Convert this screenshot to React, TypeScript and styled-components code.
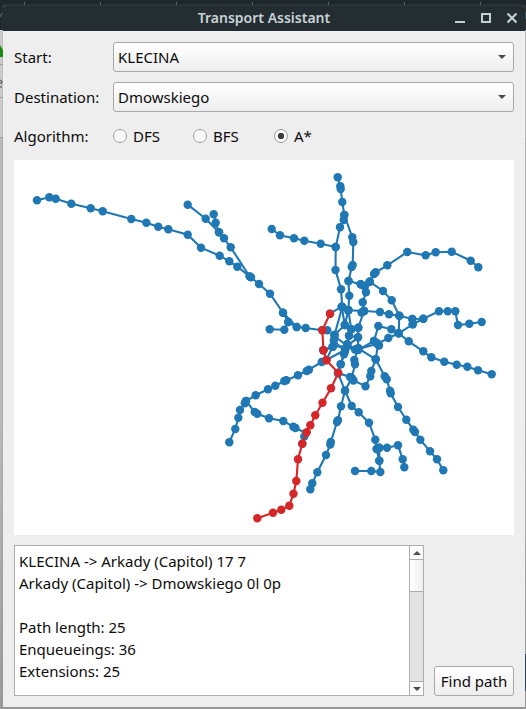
import React, { useState } from 'react';
import styled, { createGlobalStyle } from 'styled-components';

const GlobalStyle = createGlobalStyle`
  * { box-sizing: border-box; }
  body { margin: 0; overflow: hidden; }
`;

const Desktop = styled.div`
  position: relative;
  width: 526px;
  height: 709px;
  padding: 5px 1px 2px 3px;
  overflow: hidden;
  font-family: 'Noto Sans', sans-serif;
  font-size: 15px;
  color: #0c0c0c;
  background: linear-gradient(#1e272c 0 30px, #cfcfcf 30px 137px, #bdbdbd 137px 420px, #9c9c9c 709px);
`;

const Backdrop = styled.svg`
  position: absolute;
  inset: 0;
`;

const Window = styled.main`
  position: relative;
  display: flex;
  flex-direction: column;
  height: 702px;
  background: #eeeeee;
  border-radius: 3px 3px 0 0;
  overflow: hidden;
  box-shadow: 0 0 3px #6666;
`;

const TitleBar = styled.header`
  display: grid;
  grid-template-columns: 70px 1fr 70px;
  align-items: start;
  height: 26px;
  flex: none;
  background: #232d32;
  border-top: 1px solid #2b363b;
  color: #c9d3d6;
`;

const Title = styled.h1`
  grid-column: 2;
  margin: 0;
  text-align: center;
  font-size: 14px;
  line-height: 23px;
  font-weight: 600;
  white-space: nowrap;
`;

const WindowControls = styled.svg`
  display: block;
`;

const Content = styled.div`
  display: flex;
  flex-direction: column;
  padding: 11px 11px 0 11px;
`;

const Field = styled.div<{ $gap?: number }>`
  display: grid;
  grid-template-columns: 99px 401px;
  align-items: center;
  height: 30px;
  margin-bottom: ${(p) => p.$gap ?? 10}px;
`;

const Label = styled.span`
  line-height: 22px;
  white-space: nowrap;
`;

const ComboBox = styled.button`
  display: flex;
  align-items: center;
  justify-content: space-between;
  height: 30px;
  padding: 0 7px 0 4px;
  font: inherit;
  color: inherit;
  text-align: left;
  border: 1px solid #a9a9a9;
  border-radius: 3px;
  background: linear-gradient(#ffffff, #eeeeee);
`;

const RadioGroup = styled.div`
  display: grid;
  grid-template-columns: 80px 81px 1fr;
`;

const RadioLabel = styled.label`
  display: flex;
  align-items: center;
  gap: 6px;
  line-height: 22px;
`;

const Radio = styled.input`
  appearance: none;
  width: 14px;
  height: 14px;
  margin: 0;
  border: 1px solid #9a9a9a;
  border-radius: 50%;
  background: #fff;
  &:checked {
    background: radial-gradient(circle, #3c3c3c 0 2.8px, #fff 3.6px);
  }
`;

const Plot = styled.svg`
  display: block;
  width: 500px;
  height: 375px;
  background: #fff;
`;

const Footer = styled.footer`
  display: flex;
  justify-content: space-between;
  align-items: flex-end;
  margin-top: 10px;
`;

const Output = styled.section`
  display: flex;
  width: 410px;
  height: 151px;
  border: 1px solid #adadad;
  background: #fff;
`;

const OutputText = styled.div`
  flex: 1;
  padding: 4px 4px;
  white-space: pre;
  line-height: 22px;
`;

const ScrollBar = styled.div`
  display: flex;
  flex-direction: column;
  width: 14px;
  border-left: 1px solid #adadad;
  background: #e3e3e3;
`;

const ScrollButton = styled.div<{ $end?: boolean }>`
  display: grid;
  place-items: center;
  height: 14px;
  background: #fbfbfb;
  border-${(p) => (p.$end ? 'top' : 'bottom')}: 1px solid #adadad;
  margin-top: ${(p) => (p.$end ? 'auto' : 0)};
`;

const Thumb = styled.div`
  height: 32px;
  background: linear-gradient(90deg, #fff, #f0f0f0);
  border-bottom: 1px solid #adadad;
`;

const FindButton = styled.button`
  width: 80px;
  height: 30px;
  padding: 0;
  font: inherit;
  color: inherit;
  white-space: nowrap;
  border: 1px solid #a9a9a9;
  border-radius: 3px;
  background: linear-gradient(#ffffff, #eeeeee);
`;

const Arrow = ({ up }: { up?: boolean }) => (
  <svg width="8" height="4" viewBox="0 0 8 4">
    <path d={up ? 'M0 4L4 0L8 4Z' : 'M0 0H8L4 4Z'} fill="#4c4c4c" />
  </svg>
);

type Point = [number, number];

const routes: Point[][] = [
  [[37, 200.3], [49.3, 197.3], [55.7, 198.7], [71.3, 203.7], [90.7, 208.3], [102.7, 211.3], [131.3, 219], [146.3, 222.7], [158.2, 226.7], [168.3, 229.3], [187.7, 234.7], [201, 247.7], [219.7, 255.7], [229.3, 261.3], [237.3, 266.7], [251, 277.3], [259, 284], [270, 293.7], [283, 312.7], [288.3, 322], [296.7, 327], [305.7, 328], [322.3, 330.3], [327.3, 330.3]],
  [[187.7, 204.7], [205.7, 218.7], [219, 232.3], [224, 238.3], [230.7, 247.3], [249.5, 276.3]],
  [[213.7, 214.3], [215.7, 222.7], [219, 232.3]],
  [[283, 312.7], [296.7, 327]],
  [[269.7, 329.3], [284.3, 329.7], [288.3, 322]],
  [[271.7, 229], [280, 235.3], [294, 238.3], [304.3, 240.7], [320.7, 243.7], [335.7, 247]],
  [[337.7, 177.3], [340.3, 186.3], [340.7, 189], [342.3, 202], [344.3, 215], [343.7, 220], [340, 227.3], [335.7, 247], [335.5, 270], [341, 289.2], [342.3, 307], [348.3, 310.3]],
  [[344.3, 215], [352.3, 237.3], [353.3, 242], [352.7, 265], [351.7, 267], [348.5, 281], [349.3, 295.7], [348.3, 310.3]],
  [[348.5, 281], [360.7, 284.3], [369.7, 281.7], [374, 274], [375.7, 272.3], [387.3, 265.3], [407.3, 252], [425.7, 255.3], [435.7, 252.3], [451.7, 251.7], [470.7, 260.7], [478.3, 267.3]],
  [[369.7, 281.7], [383, 291], [391.7, 300.3], [399.3, 315.7], [398.7, 333.3], [408.7, 341.3], [423.3, 351.3], [431.3, 357.3], [444.3, 361.7], [456.7, 364.7], [467.3, 366.7], [478, 370.3], [491.7, 374.3]],
  [[360.7, 284.3], [364, 286], [369.7, 281.7], [366, 292.3], [362.7, 302.3], [364, 311]],
  [[330, 313.7], [341.7, 306.7], [348.3, 310.3], [364, 311], [380, 312], [389, 314.3], [399.3, 315.7], [412.3, 319], [423.3, 318.7], [439, 311.3], [447.7, 311.3], [455.3, 311.3], [458, 325], [469.3, 323.7], [481.7, 322]],
  [[398.7, 333.3], [412.7, 324.3], [423.3, 318.7]],
  [[412.3, 319], [412.7, 324.3]],
  [[379, 345.5], [376.7, 343], [374, 341], [378.3, 326], [391.3, 329.3], [398.7, 333.3], [388.3, 338], [378, 343.7], [358.3, 349], [347.3, 346], [334.5, 336]],
  [[342.3, 307], [334.5, 335], [332.7, 346.7], [323.3, 350.3]],
  [[348.3, 310.3], [344.8, 325], [334.5, 335], [333.8, 340.5], [345, 351.5], [340.7, 364.3]],
  [[341.7, 306.7], [344.8, 325]],
  [[348.3, 310.3], [351.3, 329.3], [349, 335.7], [347.3, 344], [344, 354.3], [340.7, 364.3], [338, 373]],
  [[364, 311], [358.3, 327.7], [358, 337.3], [358.3, 348.3], [354.3, 360], [355, 364.3], [351.7, 378.3]],
  [[364, 311], [361.5, 312.5]],
  [[351.3, 329.3], [358.3, 327.7]],
  [[349, 335.7], [358, 337.3], [347.3, 346]],
  [[332.7, 346.7], [347.3, 346], [355, 349.5]],
  [[323.3, 350.3], [332.7, 346.7], [326.3, 360], [345, 350]],
  [[358.3, 350], [374, 341]],
  [[358.3, 348.3], [375.7, 359.3], [384.7, 376.3], [386.7, 379.3], [390, 390.7], [390.7, 393.3], [398, 407], [406.3, 419.7], [413.3, 429.7], [415, 432], [420.3, 439.7], [430, 451.3], [437, 459.3], [443.3, 470.3]],
  [[378, 344.7], [375.7, 359.3], [371.3, 371], [370.3, 376.3], [365.5, 386.2], [353.5, 380.5], [350, 377], [338, 373]],
  [[326.3, 360], [321.7, 362], [309, 369.7], [306.7, 371], [298, 375.3], [286.3, 380.3], [284.3, 381], [275.3, 385.7], [268, 389.3], [255.7, 395.3], [246, 401], [244.8, 403.3], [240, 410], [238.3, 417.7], [235.3, 429], [229.3, 442.3]],
  [[246, 401], [254.7, 412], [257.3, 413.7], [269, 418.3], [283.3, 421], [293.3, 426.7], [295.5, 428], [306, 433], [304.3, 436.5], [302.3, 443.7]],
  [[338, 373], [345, 390.7], [341, 406.3], [338, 420.3], [337, 422], [330.8, 442], [330.3, 444.5], [326, 455], [317.3, 472.3], [312.3, 483.3], [310.3, 489.3]],
  [[351.7, 378.3], [345, 390.7], [351.7, 406], [358.7, 412.3], [369, 422.7], [375.3, 439.7], [376.7, 449], [379.3, 460.7], [380.3, 472], [371.3, 471], [355, 471]],
  [[376.7, 449], [379.3, 447.7], [387, 447.7], [398, 445.3], [402.7, 459.3], [404.3, 467.3]],
  [[379.3, 447.7], [379.3, 460.7]],
];

const path: Point[] = [
  [330, 313.7], [322.3, 330.3], [323.5, 350.3], [326.4, 360.2], [338.3, 373], [331, 388.3], [322.5, 402.7], [315.3, 415.3], [310.3, 425.3], [306.7, 432.3], [302.3, 443.7], [298, 459.3], [296.3, 481], [293.5, 493.7], [289.3, 505.7], [281.3, 509.7], [273, 512.7], [257.3, 518.3],
];

const Route = ({ points, color }: { points: Point[]; color: string }) => (
  <g stroke={color} fill={color}>
    <polyline points={points.map((p) => p.join()).join(' ')} fill="none" strokeWidth="2.1" />
    {points.map(([x, y], i) => (
      <circle key={i} cx={x} cy={y} r="4.2" stroke="none" />
    ))}
  </g>
);

const algorithms = ['DFS', 'BFS', 'A*'];

const report = `KLECINA -> Arkady (Capitol) 17 7
Arkady (Capitol) -> Dmowskiego 0l 0p

Path length: 25
Enqueueings: 36
Extensions: 25`;

export default function App() {
  const [algorithm, setAlgorithm] = useState('A*');
  return (
    <>
      <GlobalStyle />
      <Desktop>
        <Backdrop width="526" height="709">
          <path d="M24.5 2V5M100.5 2V5M176.5 2V5M252.5 2V5M328.5 2V5M404.5 2V5M480.5 2V5" stroke="#56636a" />
          <path d="M0 45L3 50V57H0Z" fill="#168b0c" />
          <path d="M0 64.5H3M0 97.5H3M0 137.5H3" stroke="#a6a6a6" />
          <path d="M0 80Q2 80 2 83H0M0 87H2" fill="none" stroke="#444" />
          <path d="M0 17L2 13" stroke="#6d787c" />
          <path d="M525 12h1v7h-1z" fill="#31515e" />
          <path d="M525 654h1v37h-1z" fill="#253e6b" />
        </Backdrop>
        <Window>
          <TitleBar>
            <Title>Transport Assistant</Title>
            <WindowControls width="70" height="25" viewBox="0 0 70 25" fill="none" stroke="#c3d0d3">
              <path d="M0 16H10" strokeWidth="2" />
              <rect x="27" y="8" width="8" height="8" strokeWidth="2" />
              <path d="M52.5 7.5L61.5 16.5M61.5 7.5L52.5 16.5" strokeWidth="2.2" />
            </WindowControls>
          </TitleBar>
          <Content>
            <Field>
              <Label>Start:</Label>
              <ComboBox>KLECINA<Arrow /></ComboBox>
            </Field>
            <Field $gap={9}>
              <Label>Destination:</Label>
              <ComboBox>Dmowskiego<Arrow /></ComboBox>
            </Field>
            <Field $gap={9}>
              <Label>Algorithm:</Label>
              <RadioGroup>
                {algorithms.map((name) => (
                  <RadioLabel key={name}>
                    <Radio type="radio" name="algorithm" checked={algorithm === name} onChange={() => setAlgorithm(name)} />
                    {name}
                  </RadioLabel>
                ))}
              </RadioGroup>
            </Field>
            <Plot viewBox="14 160 500 375">
              {routes.map((points, i) => (
                <Route key={i} points={points} color="#1f77b4" />
              ))}
              <Route points={path} color="#d62728" />
            </Plot>
            <Footer>
              <Output>
                <OutputText>{report}</OutputText>
                <ScrollBar>
                  <ScrollButton><Arrow up /></ScrollButton>
                  <Thumb />
                  <ScrollButton $end><Arrow /></ScrollButton>
                </ScrollBar>
              </Output>
              <FindButton>Find path</FindButton>
            </Footer>
          </Content>
        </Window>
      </Desktop>
    </>
  );
}
